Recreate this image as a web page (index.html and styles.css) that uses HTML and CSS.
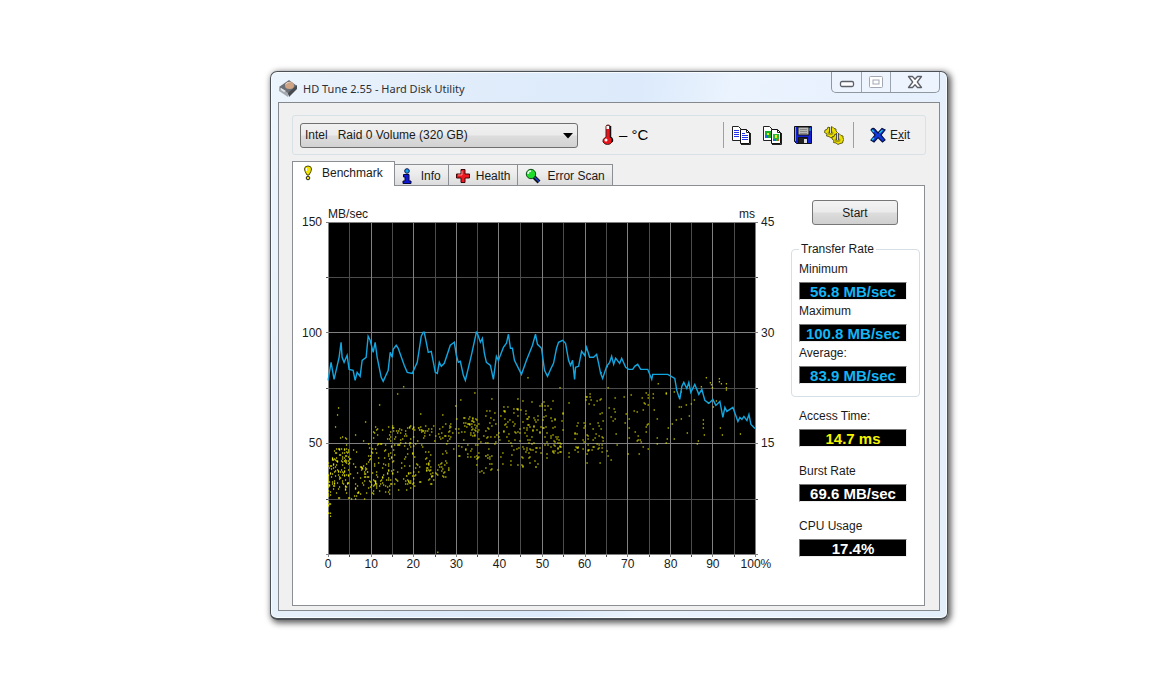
FILE: index.html
```html
<!DOCTYPE html>
<html lang="en">
<head>
<meta charset="utf-8">
<title>HD Tune 2.55 - Hard Disk Utility</title>
<link rel="stylesheet" href="styles.css">
</head>
<body>
<main class="window">
  <header class="titlebar">
    <svg class="app-icon" viewBox="0 0 20 20" aria-hidden="true">
      <path d="M1 9 11 2l8 6-8 9z" fill="#6a7076"/>
      <path d="m1 9 9 6v4L1 13z" fill="#a4aab0"/>
      <path d="m10 15 9-8v4l-8 8z" fill="#484c51"/>
      <ellipse cx="11.500" cy="7.500" rx="4.500" ry="3.500" fill="#cfa484"/>
      <path d="M7 7q2-4 7-3-4 0-7 3z" fill="#f0ddd0"/>
      <path d="m3 10 5 3-2 1-3-2z" fill="#e3e6e8"/>
    </svg>
    <h1 class="title">HD Tune 2.55 - Hard Disk Utility</h1>
    <div class="caption">
      <button class="cap-btn" aria-label="Minimize"><svg width="16" height="14" viewBox="0 0 16 14"><rect x="1.500" y="6.500" width="13" height="5" rx="1.500" fill="#fff" stroke="#5d6069" stroke-width="1.300"/></svg></button>
      <button class="cap-btn" aria-label="Maximize"><svg width="16" height="14" viewBox="0 0 16 14"><rect x="1.500" y="1.500" width="13" height="11" rx="1" fill="#fff" stroke="#a1a8b3"/><rect x="5" y="5" width="6" height="4" fill="#fff" stroke="#a1a8b3"/></svg></button>
      <button class="cap-btn cap-close" aria-label="Close"><svg width="16" height="14" viewBox="0 0 16 14"><path d="M1.500 1.500h4L8 4.200l2.500-2.700h4L10.300 7l4.200 5.500h-4L8 9.800l-2.500 2.700h-4L5.700 7z" fill="#fff" stroke="#5d6069" stroke-width="1.300" stroke-linejoin="round"/></svg></button>
    </div>
  </header>

  <div class="client">
    <div class="toolbar">
      <div class="drive">
        <select class="drive-select" aria-label="Drive">
          <option>Intel&nbsp;&nbsp; Raid 0 Volume (320 GB)</option>
        </select>
        <svg class="drive-arrow" width="10" height="6" viewBox="0 0 10 6" aria-hidden="true"><path d="M0 0h10L5 5.500z" fill="#000"/></svg>
      </div>
      <div class="temp">
        <svg width="14" height="22" viewBox="0 0 14 22" aria-hidden="true">
          <path d="M5 2.500Q5 1 7 1t2.500 1.500V13q3 2 1.500 5-1.500 2.500-4.500 2.500T2 18q-1-3 3-5z" fill="#e8161a" stroke="#4a2020"/>
          <path d="M5.500 2h2.500v3H5.500z" fill="#fff"/><path d="M9.500 2v11q3 2 1.500 5" fill="none" stroke="#111" stroke-width="1.500"/>
          <circle cx="5" cy="16" r="1.500" fill="#fff"/>
        </svg>
        <span>– °C</span>
      </div>
      <div class="actions">
        <button class="tool" aria-label="Copy text"><svg width="20" height="20" viewBox="0 0 20 20">
          <path d="M1.500 1.500h6l3 3v11h-9z" fill="#fff" stroke="#222"/><path d="M3 5.500h5M3 7.500h5M3 9.500h5M3 11.500h5" stroke="#2432e8"/>
          <path d="M9.500 4.500h6l3 3v11h-9z" fill="#fff" stroke="#111"/><path d="M15.500 4.500v3h3M19.500 8v11.500H10" fill="none" stroke="#222"/><path d="M11 8.500h3M11 10.500h6M11 12.500h6M11 14.500h6" stroke="#2432e8"/>
        </svg></button>
        <button class="tool" aria-label="Copy screenshot"><svg width="20" height="20" viewBox="0 0 20 20">
          <path d="M1.500 1.500h6l3 3v11h-9z" fill="#fff" stroke="#222"/><path d="M3 6h6v7H3z" fill="#17ad28"/><path d="M3 10h3v3H3z" fill="#1a6bdc"/><path d="M5 8h2v2H5z" fill="#f5e525"/>
          <path d="M9.500 4.500h6l3 3v11h-9z" fill="#fff" stroke="#111"/><path d="M15.500 4.500v3h3M19.500 8v11.500H10" fill="none" stroke="#222"/><path d="M11 9h6v7h-6z" fill="#27b834"/><path d="M13 10h2v3h-2z" fill="#f5e525"/><path d="M11 14h3v2h-3z" fill="#1a6bdc"/><path d="M15 14h2v2h-2z" fill="#d52"/>
        </svg></button>
        <button class="tool" aria-label="Save"><svg width="20" height="20" viewBox="0 0 20 20">
          <path d="M1.500 1.500h17v17h-15l-2-2z" fill="#1220d4" stroke="#111"/><path d="M2.500 2v14" stroke="#17c8e8"/><path d="M5 2h11v8H5z" fill="#b8b8b8" stroke="#111"/><path d="M7 4.500h7M7 6.500h7M7 8.500h7" stroke="#888"/><path d="M5.500 12.500h9v6h-9z" fill="#222" stroke="#111"/><path d="M11 14h3v4h-3z" fill="#ddd"/><path d="M17 3v3" stroke="#17c8e8"/>
        </svg></button>
        <button class="tool" aria-label="Options"><svg width="20" height="20" viewBox="0 0 20 20">
          <g fill="#eadf00" stroke="#443f00" stroke-width=".8"><path d="m1 5 2-.5L4 2l2 1 2-1.500 2 2 2 .5v2l1.500 1.500L12 9l-.5 2-2.500.5L7 13l-2-1.500L2.500 11l.5-2L.500 7.500z"/><path d="m8 12 2-.5L11 9l2 1 2-1.500 2 2 2 .5v2l.8 1.500L19 16l-.5 2-2.500.5-2 1-2-1.500-2.500-.5.500-2-2-1.500z"/></g>
          <ellipse cx="6.500" cy="8" rx="3" ry="2" fill="#a79c0c"/><ellipse cx="13.500" cy="15" rx="3" ry="2" fill="#a79c0c"/><path d="M6.500 2v6M13.500 8v7" stroke="#222" stroke-width="3"/><path d="M6.500 2v6M13.500 8v7" stroke="#d8d8d8" stroke-width="1.500"/>
        </svg></button>
        <button class="exit"><svg width="16" height="16" viewBox="0 0 16 16" aria-hidden="true"><path d="M1 3q2-3 4-.5L8 6l4-4.500L15 3l-4 5 4 5-2.500 2L8 10.500 4 15l-3-2 4-5z" fill="#1238d8" stroke="#061044" stroke-width="1.200"/><path d="m2 3 2 2M12.500 3l-3 3M4 11l-2 2" stroke="#21bce8" stroke-width="1.500"/></svg><span>E<u>x</u>it</span></button>
      </div>
    </div>

    <nav class="tabs" role="tablist">
      <button class="tab active" role="tab" aria-selected="true"><svg width="10" height="16" viewBox="0 0 10 16" aria-hidden="true"><path d="M1.500 4q0-3 3.500-3t3.500 3q0 2-2.500 6H4Q1.500 6 1.500 4z" fill="#f3e700" stroke="#4b4700"/><path d="M3.500 3v3" stroke="#fff"/><circle cx="5" cy="13" r="1.800" fill="#f3e700" stroke="#222"/></svg>Benchmark</button>
      <button class="tab" role="tab"><svg width="10" height="16" viewBox="0 0 10 16" aria-hidden="true"><circle cx="5" cy="3" r="2.300" fill="#12a6ea" stroke="#0a1050"/><path d="M1.500 6.500h5.500v6.500h2v2.500h-8V13h2V9H1.500z" fill="#1018d8" stroke="#050838"/></svg>Info</button>
      <button class="tab" role="tab"><svg width="14" height="16" viewBox="0 0 14 16" aria-hidden="true"><path d="M5 1.500h4v4.500h4.500v4H9v4.500H5V10H.5V6H5z" fill="#ed1820" stroke="#3b0709"/><path d="M6 3v4H2" stroke="#ff8c8c" fill="none"/></svg>Health</button>
      <button class="tab" role="tab"><svg width="16" height="16" viewBox="0 0 16 16" aria-hidden="true"><path d="m9 9 5 5" stroke="#111" stroke-width="4"/><path d="m9 8.500 5 5" stroke="#1d43d0" stroke-width="1.500"/><circle cx="6" cy="6" r="4.700" fill="#20dc2b" stroke="#0a4a12"/><path d="M3 6q0-3 3-3" stroke="#e5ffe7" stroke-width="1.500" fill="none"/></svg>Error Scan</button>
    </nav>

    <section class="panel">
      <svg class="chart" viewBox="-32 -16 486 366" role="img" aria-label="Transfer rate and access time">
        <rect width="427" height="332" fill="#000"/>
        <g id="grid" shape-rendering="crispEdges"></g>
        <g id="labels" class="axis"></g>
        <path id="dots" class="dots"/>
        <polyline class="rate" points="0,158 3,140 6,157 11,135 13,120 14,135 16,140 19,133 21,147 25,148 27,158 29,150 32,154 34,138 38,135 40,114 42,118 45,130 47,120 49,135 53,155 55,159 60,148 62,130 64,135 65,127 68,123 70,126 76,143 79,150 84,151 89,140 93,114 95,110 96,110 100,130 103,129 107,150 109,151 111,140 113,144 116,141 122,123 126,120 128,133 130,140 132,139 135,153 137,158 143,133 148,110 149,111 152,120 154,116 156,131 158,140 162,143 165,157 168,134 170,138 175,125 178,121 180,112 182,126 184,126 186,138 193,152 198,138 204,123 207,112 209,122 213,126 216,148 219,154 223,145 225,141 228,126 230,120 234,118 237,121 240,138 242,143 244,138 246,157 247,145 250,144 253,129 256,133 258,125 261,135 265,135 268,132 270,141 272,151 274,156 278,144 281,140 283,134 285,142 287,136 291,141 293,136 297,145 300,147 304,147 306,144 309,142 312,147 319,147 323,157 324,152 339,152 346,156 348,168 351,177 353,164 355,160 358,166 360,160 362,170 366,162 370,172 373,167 376,178 380,181 384,177 387,183 391,179 394,195 396,185 398,189 404,185 409,199 411,195 413,197 415,194 418,198 420,192 422,202 426,206"/>
      </svg>
      <aside class="side">
        <button class="start">Start</button>
        <fieldset class="group">
          <legend>Transfer Rate</legend>
          <label for="min">Minimum</label><output id="min" class="value blue">56.8 MB/sec</output>
          <label for="max">Maximum</label><output id="max" class="value blue">100.8 MB/sec</output>
          <label for="avg">Average:</label><output id="avg" class="value blue">83.9 MB/sec</output>
        </fieldset>
        <div class="stats">
          <div class="stat"><label for="access">Access Time:</label><output id="access" class="value yellow">14.7 ms</output></div>
          <div class="stat"><label for="burst">Burst Rate</label><output id="burst" class="value">69.6 MB/sec</output></div>
          <div class="stat"><label for="cpu">CPU Usage</label><output id="cpu" class="value">17.4%</output></div>
        </div>
      </aside>
    </section>
  </div>
</main>
<script src="chart.js"></script>
</body>
</html>
```
FILE: styles.css
```css
* { box-sizing: border-box; }
body {
  margin: 0;
  padding: 71px 221px 79px 270px;
  background: #fff;
  color: #1a1a1a;
  font: 12px/16px "Liberation Sans", Arial, sans-serif;
}
button { font: inherit; color: inherit; padding: 0; border: 0; background: none; }
svg { display: block; flex: none; }
.window {
  min-width: 678px;
  padding: 0 7px 7px;
  border: 2px solid #4b5157;
  border-width: 1px 1px 2px;
  border-radius: 7px;
  background: linear-gradient(100deg, #ecf4fc 0, #e0ecfa 28%, #dceafb 48%, #eaf3fe 60%, #e4effc 100%);
  box-shadow: inset 0 0 0 1px #f8fcff, 2px 2px 6px 1px rgba(0, 0, 0, .65);
}
.titlebar { display: flex; height: 30px; align-items: center; }
.app-icon { width: 20px; height: 20px; margin: 2px 5px 0 0; }
.title { margin: 3px 0 0; font: 11px/16px "Noto Sans", sans-serif; color: #2c3036; }
.caption {
  display: flex;
  align-self: flex-start;
  height: 21px;
  margin-left: auto;
  border: 1px solid #8f979f;
  border-top: 0;
  border-radius: 0 0 5px 5px;
  background: #edf4fd;
}
.cap-btn { display: flex; width: 29px; align-items: center; justify-content: center; }
.cap-btn + .cap-btn { border-left: 1px solid #9ba5b0; }
.cap-close { width: 49px; }
.client { padding: 12px 13px 4px; border: 1px solid #85898d; background: #f0f0f0; }
.toolbar {
  display: flex;
  height: 40px;
  align-items: center;
  padding: 0 15px 0 7px;
  border: 1px solid #d8e1e6;
  border-radius: 3px;
}
.drive { position: relative; flex: 0 1 278px; }
.drive-select {
  display: block;
  width: 100%;
  height: 25px;
  padding: 0 20px 0 4px;
  appearance: none;
  border: 1px solid #707070;
  border-radius: 3px;
  background: linear-gradient(#f1f1f1, #ebebeb 48%, #dddddd 52%, #d2d2d2);
  color: inherit;
  font: inherit;
}
.drive-arrow { position: absolute; right: 5px; top: 10px; }
.temp { display: flex; gap: 4px; align-items: center; margin-left: 23px; color: #000; font-size: 15px; }
.actions { display: flex; gap: 11px; align-items: center; margin-left: auto; }
.actions::before { content: ""; width: 1px; height: 26px; margin-right: -4px; background: #a0a0a0; }
.exit { display: flex; gap: 4px; align-items: center; height: 26px; margin-left: -2px; padding-left: 16px; border-left: 1px solid #a0a0a0; }
.tabs { display: flex; align-items: flex-end; height: 29px; margin-top: 1px; }
.tab {
  display: flex;
  gap: 6px;
  align-items: center;
  height: 21px;
  padding: 1px 7px 0;
  border: 1px solid #8b8f94;
  border-left: 0;
  border-bottom: 0;
  background: linear-gradient(#f3f3f3, #ebebeb 50%, #dcdcdc);
}
.tab:nth-child(2) { gap: 9px; }
.tab.active {
  position: relative;
  gap: 9px;
  height: 25px;
  margin-bottom: -1px;
  padding: 0 11px 2px 10px;
  border-left: 1px solid #8b8f94;
  background: #fff;
}
.panel {
  display: flex;
  gap: 8px;
  min-height: 421px;
  margin-right: 1px;
  padding: 14px 4px 0 3px;
  border: 1px solid #8b8f94;
  background: #fff;
}
.chart { flex: 1 1 0; min-width: 0; align-self: flex-start; margin-top: 6px; }
.axis { fill: #1a1a1a; font: 12px "Liberation Sans", Arial, sans-serif; }
.dots { fill: #f0f000; stroke: #f0f000; stroke-width: .2; }
.rate { fill: none; stroke: #12a6e0; stroke-width: 1.4; }
.side { flex: 0 0 129px; }
.start {
  display: block;
  width: 86px;
  height: 25px;
  margin-left: 21px;
  border: 1px solid #777;
  border-radius: 3px;
  background: linear-gradient(#f3f3f3, #ebebeb 48%, #dddddd 52%, #cfcfcf);
}
.group {
  min-width: 0;
  margin: 16px 0 0;
  padding: 4px 12px 9px 7px;
  border: 1px solid #d5dfe5;
  border-radius: 4px;
}
.group legend { padding: 0 2px; }
.group label, .stat label { display: block; }
.value {
  display: block;
  height: 18px;
  margin: 5px 0 3px;
  border: 1px solid #777;
  border-color: #777 #eee #eee #777;
  background: #000;
  color: #fff;
  font: bold 15px/17px "Liberation Sans", Arial, sans-serif;
  text-align: center;
}
.blue { color: #14b5f5; }
.yellow { color: #f5f500; }
.stats { display: grid; gap: 13px; margin: 11px 13px 0 8px; }
```
FILE: chart.js
```js
const NS = "http://www.w3.org/2000/svg";
const W = 427, H = 332;
const grid = document.getElementById("grid");
const labels = document.getElementById("labels");

function line(x, y, w, h, color) {
  const r = document.createElementNS(NS, "rect");
  Object.entries({ x, y, width: w, height: h, fill: color }).forEach(([k, v]) => r.setAttribute(k, v));
  grid.appendChild(r);
}
function text(x, y, anchor, value) {
  const t = document.createElementNS(NS, "text");
  t.setAttribute("x", x);
  t.setAttribute("y", y);
  t.setAttribute("text-anchor", anchor);
  t.textContent = value;
  labels.appendChild(t);
}

for (let pass = 0; pass < 2; pass++) {
  for (let i = 0; i <= 20; i++) {
    if ((i % 2 === 0) === (pass === 1)) line(Math.round(i * (W - 1) / 20), 0, 1, H + 2, pass ? "#808080" : "#4c4c4c");
  }
  for (let i = 0; i <= 6; i++) {
    if ((i % 2 === 0) === (pass === 1)) line(-2, Math.round(i * (H - 1) / 6), W + 4, 1, pass ? "#808080" : "#4c4c4c");
  }
}
[150, 100, 50].forEach((v, i) => text(-6, Math.round(i * 110.5) + 4, "end", v));
[45, 30, 15].forEach((v, i) => text(432, Math.round(i * 110.5) + 4, "start", v));
for (let i = 0; i <= 10; i++) text(Math.round(i * W / 10), 345, "middle", i === 10 ? "100%" : i * 10);
text(0, -4, "start", "MB/sec");
text(426, -4, "end", "ms");

/* Access time samples: isolated readings first, then the dense bands. */
const dots = [
  [109,329],[75,164],[69,171],[51,182],[10,185],[9,192],[7,204],[37,199],[92,191],[127,183],[132,177],[146,170],
  [163,176],[189,176],[194,178],[114,192],[199,155],[231,165],[279,165],[257,174],[261,171],[257,177],[262,177],
  [295,174],[302,172],[317,170],[319,172],[324,171],[324,175],[319,175],[313,175],[329,161],[337,170],[337,171],
  [345,169],[352,169],[372,164],[377,155],[381,160],[382,162],[390,156],[390,159],[392,161],[397,161],[397,165],
  [397,167],[383,165],[365,177],[379,180],[384,184],[387,178],[362,181],[350,184],[352,184],[357,182],[360,193],
  [352,196],[347,197],[343,201],[339,205],[345,216],[358,210],[369,218],[374,201],[374,205],[375,212],[374,197],
  [391,205],[393,212],[411,211],[368,221],[338,216],[337,220],[328,215],[328,221],[328,196],[319,201],[314,224],
  [310,231],[299,231],[308,218],[300,215],[309,217],[312,219],[317,209],[317,204],[300,205],[300,196],[297,191],
  [286,196],[286,189],[280,185],[282,194],[296,200],[315,180],[316,181],[325,187],[272,150],[278,144],[273,190],
  [261,174],[258,174],[268,178],[260,181],[272,176],[265,182],[271,191],[264,206],[278,228],[282,237],[288,222],
  [279,233],[249,200],[255,205],[240,180],[234,190],[233,198],[213,183],[224,178],[216,183],[219,183],[211,183]
];
let seed = 255;
function random() {
  seed = (seed * 1664525 + 1013904223) % 4294967296;
  return seed / 4294967296;
}
/* x from, x to, y from, y to, count */
const bands = [
  [0,3,240,294,32],[3,22,226,262,84],[4,20,258,276,18],[10,30,212,240,12],[20,42,240,278,42],[34,62,216,264,62],
  [40,62,255,272,28],[44,86,203,225,50],[62,105,222,262,68],[66,90,250,268,16],[84,122,200,224,42],
  [100,121,238,258,34],[114,150,196,236,46],[134,151,194,214,30],[148,175,212,252,34],[156,180,184,226,26],
  [175,200,182,222,36],[182,214,218,248,32],[198,228,192,240,48],[225,233,206,232,18],[246,275,200,230,38],
  [236,272,222,242,10],[198,236,178,208,14],[270,330,160,230,16]
];
for (const [x0, x1, y0, y1, n] of bands) {
  for (let i = 0; i < n; i++) dots.push([Math.floor(x0 + random() * (x1 - x0)), Math.floor(y0 + random() * (y1 - y0))]);
}
document.getElementById("dots").setAttribute("d", dots.map(([x, y]) => `M${x} ${y}h1v1h-1z`).join(""));
```
